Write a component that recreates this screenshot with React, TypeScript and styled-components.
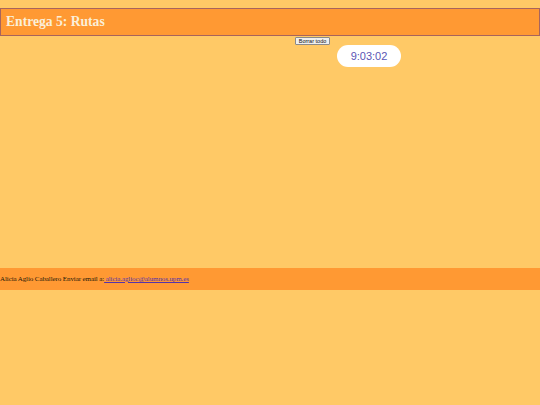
import React from 'react'
import styled, { createGlobalStyle } from 'styled-components'

const GlobalStyle = createGlobalStyle`
  html, body {
    margin: 0;
    padding: 0;
    background: #ffc966;
  }
  body {
    font-family: "Liberation Serif", "Times New Roman", serif;
  }
`

const Page = styled.div`
  min-height: 405px;
  padding-top: 8px;
  display: flex;
  flex-direction: column;
`

const Header = styled.header`
  height: 26px;
  background: #ff9933;
  border: 1px solid #a8645c;
  display: flex;
  align-items: center;
  padding-left: 5px;

  h1 {
    margin: 0;
    font-size: 13.6px;
    font-weight: bold;
    color: #fbefd8;
  }
`

const Main = styled.main`
  height: 231px;
  display: flex;
  flex-direction: column;
  align-items: flex-start;
  padding-left: 295px;
  padding-top: 1px;
`

const ClearButton = styled.button`
  height: 8px;
  width: 35px;
  padding: 0;
  font-family: "Liberation Sans", Arial, sans-serif;
  font-size: 5.5px;
  line-height: 6px;
  color: #111;
  background: #efefef;
  border: 1px solid #8a8a8a;
  border-radius: 1px;
`

const Clock = styled.div`
  margin-left: 42px;
  width: 64px;
  height: 22px;
  border-radius: 11px;
  background: #ffffff;
  color: #5a55b4;
  font-family: "Liberation Sans", Arial, sans-serif;
  font-size: 11px;
  display: flex;
  align-items: center;
  justify-content: center;
`

const Footer = styled.footer`
  height: 22px;
  background: #ff9933;
  display: flex;
  align-items: center;
  font-size: 7px;
  font-weight: normal;
  letter-spacing: -0.1px;
  color: #241808;
  white-space: pre;

  a {
    color: #5533aa;
  }
`

export default function App() {
  return (
    <>
      <GlobalStyle />
      <Page>
        <Header>
          <h1>Entrega 5: Rutas</h1>
        </Header>
        <Main>
          <ClearButton>Borrar todo</ClearButton>
          <Clock>9:03:02</Clock>
        </Main>
        <Footer>
          Alicia Aglio Caballero Enviar email a:
          <a href="mailto:alicia.aglioc@alumnos.upm.es"> alicia.aglioc@alumnos.upm.es</a>
        </Footer>
      </Page>
    </>
  )
}
